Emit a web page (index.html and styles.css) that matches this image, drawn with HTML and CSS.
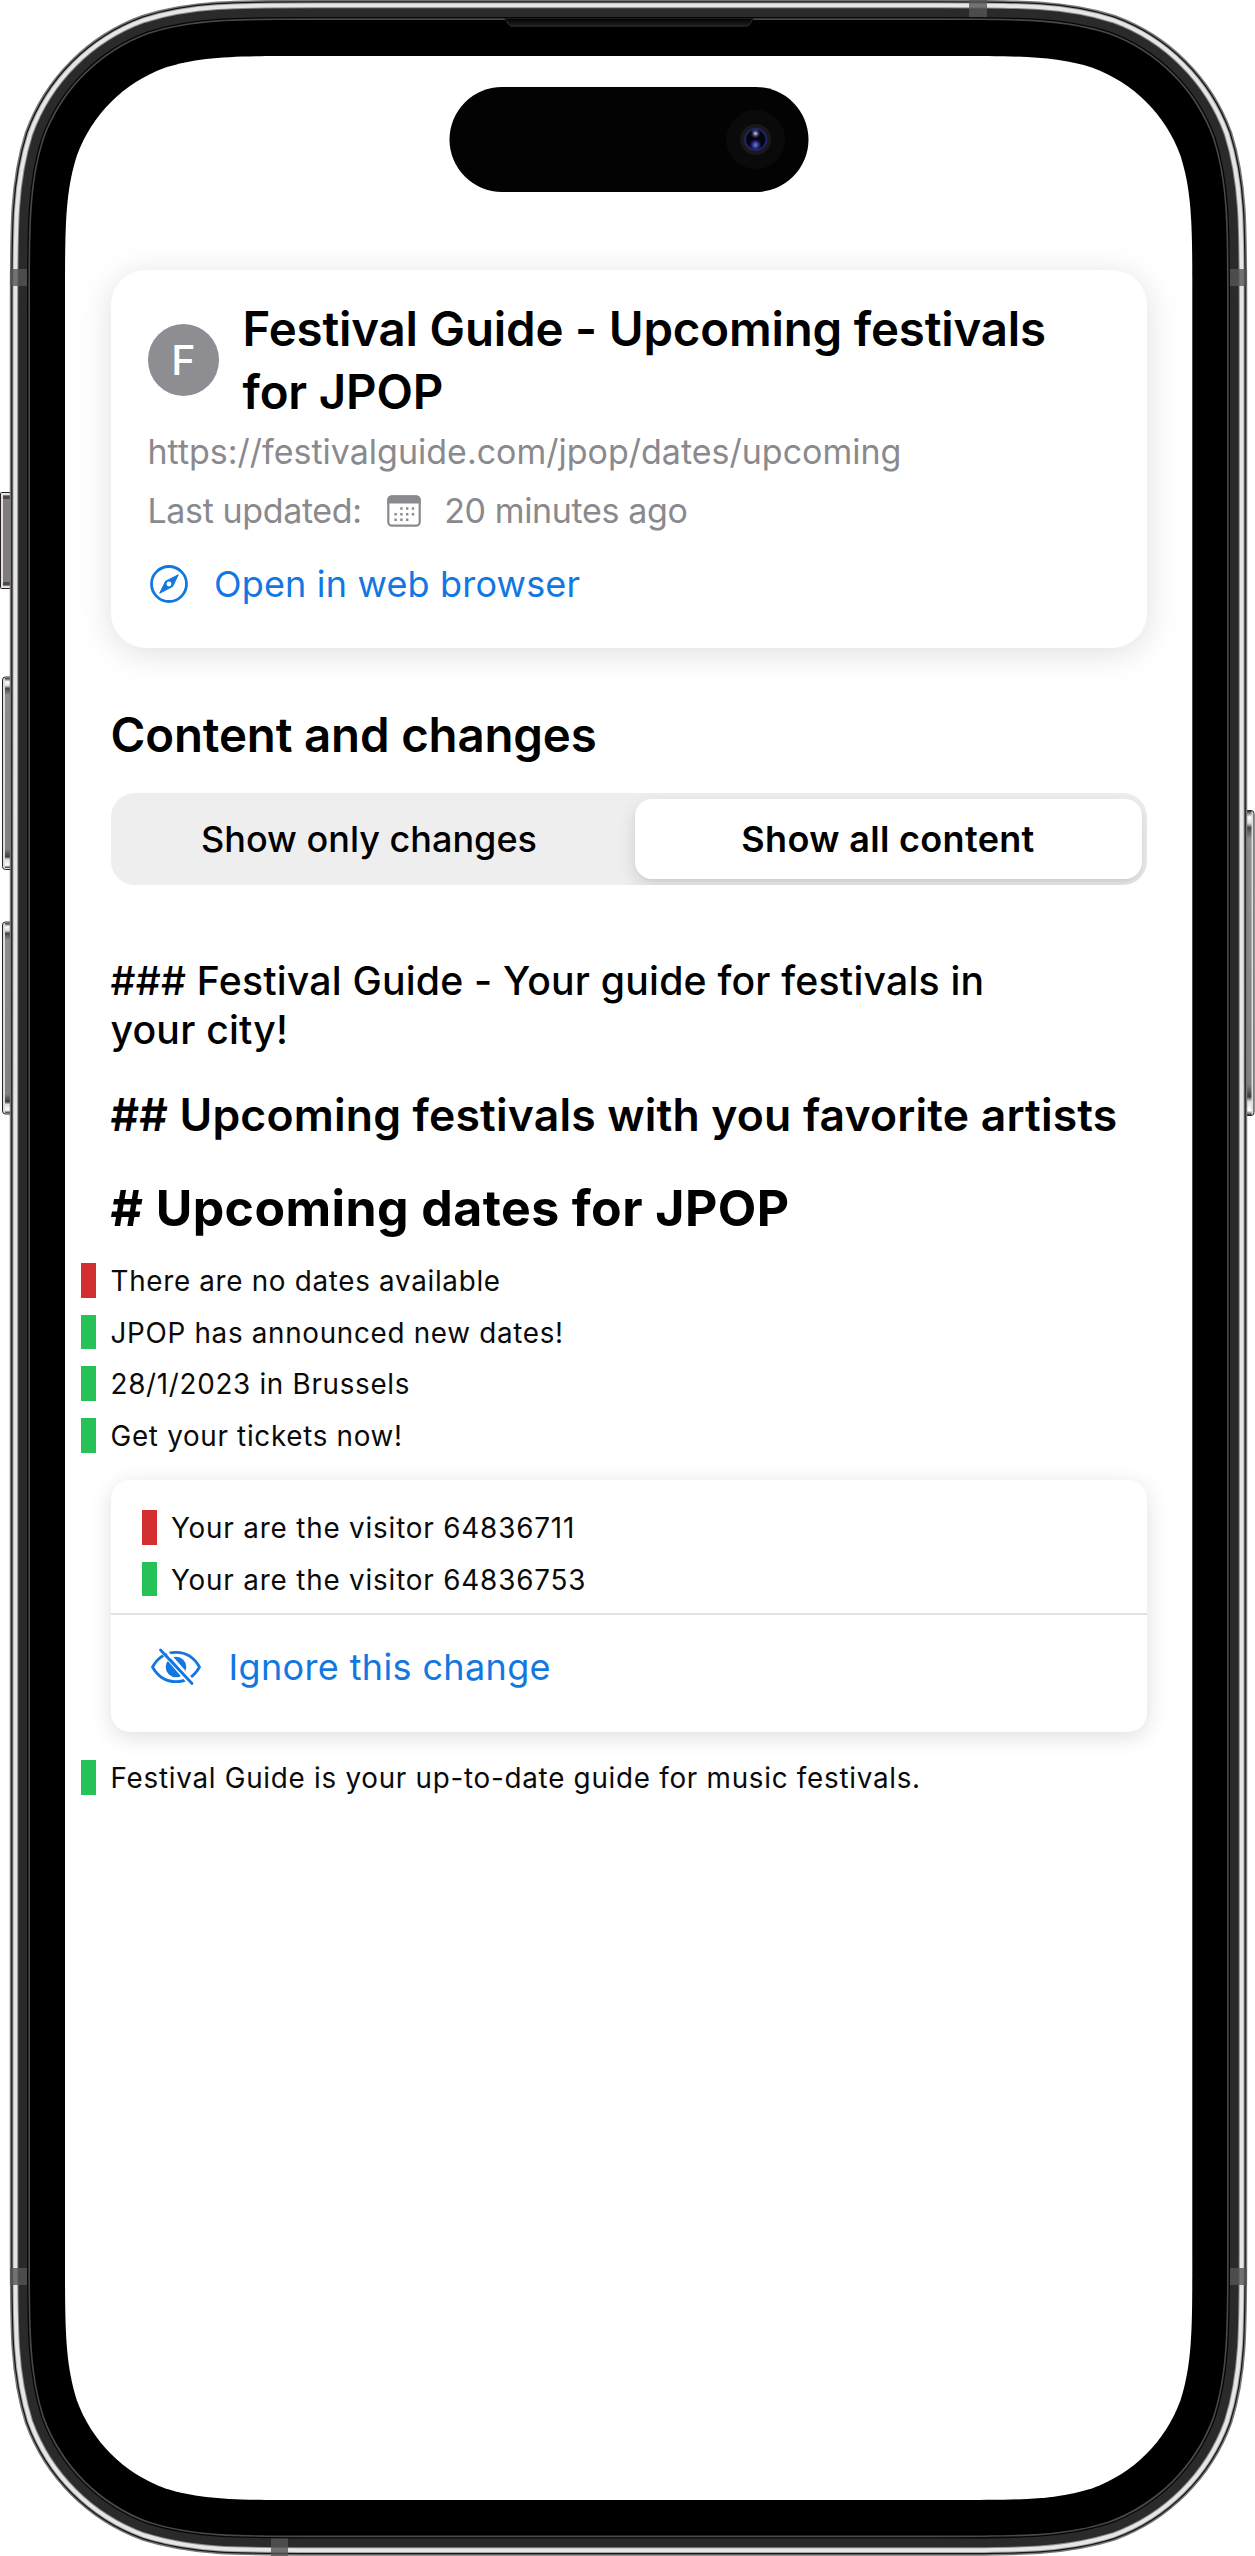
FILE: index.html
```html
<!DOCTYPE html>
<html lang="en">
<head>
<meta charset="utf-8">
<title>Festival Guide - Upcoming festivals for JPOP</title>
<link rel="stylesheet" href="styles.css">
</head>
<body>
<div class="phone">
  <svg class="frame" viewBox="0 0 1255 2556" aria-hidden="true">
    <defs>
      <path id="bezel" d="M30 307.4C30 224.6 30 183.3 44.1 138.7C61.8 90.1 100.1 51.8 148.7 34.1C193.3 20 234.6 20 317.4 20H939.6C1022.4 20 1063.7 20 1108.3 34.1C1156.9 51.8 1195.2 90.1 1212.9 138.7C1227 183.3 1227 224.6 1227 307.4V2248.1C1227 2330.9 1227 2372.2 1212.9 2416.8C1195.2 2465.4 1156.9 2503.7 1108.3 2521.4C1063.7 2535.5 1022.4 2535.5 939.6 2535.5H317.4C234.6 2535.5 193.3 2535.5 148.7 2521.4C100.1 2503.7 61.8 2465.4 44.1 2416.8C30 2372.2 30 2330.9 30 2248.1Z"/>
      <linearGradient id="cap" x1="0" y1="0" x2="0" y2="1">
        <stop offset="0" stop-color="#333"/><stop offset=".02" stop-color="#fff"/><stop offset=".04" stop-color="#ddd"/>
        <stop offset=".055" stop-color="#444"/><stop offset=".09" stop-color="#8f8c8b"/><stop offset=".9" stop-color="#827f7d"/>
        <stop offset=".94" stop-color="#3d3b3b"/><stop offset=".955" stop-color="#ddd"/><stop offset=".985" stop-color="#fff"/><stop offset="1" stop-color="#333"/>
      </linearGradient>
      <linearGradient id="earpiece" x1="0" y1="0" x2="0" y2="1">
        <stop offset="0" stop-color="#030303"/><stop offset="1" stop-color="#1e1e1e"/>
      </linearGradient>
      <radialGradient id="glint"><stop offset="0" stop-color="#d9d2f2"/><stop offset="1" stop-color="#4a3d9a" stop-opacity="0"/></radialGradient>
      <radialGradient id="glow"><stop offset="0" stop-color="#3f9db5"/><stop offset=".5" stop-color="#3a2d93"/><stop offset="1" stop-color="#2a1470" stop-opacity="0"/></radialGradient>
    </defs>

    <!-- side buttons -->
    <g stroke="#222" stroke-width="1">
      <rect x=".5" y="492.5" width="14" height="96" rx="1" fill="#e8e0e0"/>
      <rect x="2.5" y="677" width="14" height="192.5" rx="3" fill="#ddd"/>
      <rect x="2.5" y="922" width="14" height="192" rx="3" fill="#ddd"/>
      <rect x="1240" y="810.5" width="14" height="305" rx="3" fill="#ddd"/>
    </g>
    <rect x="3" y="495" width="8" height="91" fill="#827d7c"/>
    <path d="M3 497.500h8M3 583.500h8" stroke="#4c4948" stroke-width="3"/>
    <rect x="5" y="678" width="6" height="190" fill="url(#cap)"/>
    <rect x="5" y="923" width="6" height="190" fill="url(#cap)"/>
    <rect x="1246" y="811" width="5.500" height="304" fill="url(#cap)"/>

    <!-- metal rim, outermost layer first -->
    <g fill="none">
      <use href="#bezel" stroke="#777" stroke-width="40.500"/>
      <use href="#bezel" stroke="#161616" stroke-width="37.500"/>
      <use href="#bezel" stroke="#a5a5a5" stroke-width="35"/>
      <use href="#bezel" stroke="#e6e6e6" stroke-width="33"/>
      <use href="#bezel" stroke="#888" stroke-width="25.500"/>
      <use href="#bezel" stroke="#2b2a2a" stroke-width="23.500"/>
      <use href="#bezel" stroke="#060606" stroke-width="6"/>
      <use href="#bezel" stroke="#484848" stroke-width="3.400"/>
    </g>
    <use href="#bezel" fill="#000"/>

    <!-- antenna bands -->
    <g fill="#555" fill-opacity=".8">
      <path d="M10 269h17v17H10zM1230 269h17v17h-17zM10 2268h17v17H10zM1230 2268h17v17h-17zM969 0h18v17h-18zM271 2538.500h17V2556h-17z"/>
    </g>

    <path d="M504 18.500h250l-1.500 1.500c-3 2-2 6-7 6H513c-5 0-5-4-7.500-6z" fill="url(#earpiece)"/>
    <path d="M504.500 19c3 1 2.500 7.200 8.500 7.200h232.500c6 0 5-6.200 8-7.200" fill="none" stroke="#333"/>
    <path d="M65 297.500C65 228 65 193.200 76.800 155.800C91.700 114.900 123.900 82.700 164.800 67.800C202.200 56 237 56 306.500 56H950.800C1020.300 56 1055.100 56 1092.500 67.800C1133.400 82.700 1165.600 114.900 1180.500 155.800C1192.300 193.200 1192.300 228 1192.300 297.500V2258.500C1192.300 2328 1192.300 2362.800 1180.500 2400.200C1165.600 2441.100 1133.400 2473.300 1092.500 2488.200C1055.100 2500 1020.300 2500 950.800 2500H306.500C237 2500 202.200 2500 164.800 2488.200C123.900 2473.300 91.700 2441.100 76.800 2400.200C65 2362.800 65 2328 65 2258.500Z" fill="#fff"/>

    <!-- camera island -->
    <rect x="449.500" y="87" width="359" height="105" rx="52.500" fill="#030303"/>
    <circle cx="755.700" cy="139.500" r="29.500" fill="#0a0a0a"/>
    <circle cx="755.700" cy="139.500" r="15.500" fill="#191919"/>
    <circle cx="755.700" cy="139.500" r="10.700" fill="#05050f" stroke="#1d2465" stroke-width="2"/>
    <circle cx="755.500" cy="133.500" r="5" fill="url(#glint)"/>
    <circle cx="755.500" cy="145" r="6" fill="url(#glow)"/>
  </svg>

  <main class="content">
    <section class="site-card">
      <header class="site-head">
        <span class="avatar">F</span>
        <h1 class="site-title">Festival Guide - Upcoming festivals<br>for JPOP</h1>
      </header>
      <p class="meta">https://festivalguide.com/jpop/dates/upcoming</p>
      <p class="meta updated">
        <span class="tight">Last updated:</span>
        <svg class="calendar" viewBox="0 0 34 32" aria-hidden="true">
          <rect x="1.300" y="1.300" width="31.400" height="29.400" rx="3.700" fill="none" stroke="currentColor" stroke-width="2.200"/>
          <path d="M.5 8.500V5Q.5.500 5 .500h24q4.500 0 4.500 4.500v3.500z" fill="currentColor"/>
          <path d="M13.200 13.600h2.400M19 13.600h2.400M24.800 13.600h2.400M7.400 19.200h2.400M13.200 19.200h2.400M19 19.200h2.400M24.800 19.200h2.400M7.400 24.800h2.400M13.200 24.800h2.400M19 24.800h2.400" stroke="currentColor" stroke-width="2.500"/>
        </svg>
        <span class="tight">20 minutes ago</span>
      </p>
      <a class="action open">
        <svg class="compass" viewBox="0 0 38 38" aria-hidden="true">
          <circle cx="19" cy="19" r="17.500" fill="none" stroke="currentColor" stroke-width="2.800"/>
          <path d="M28.300 9.800L22.600 21.500 9.700 28.200 15.600 16.200Z" fill="currentColor" stroke="currentColor" stroke-width="1" stroke-linejoin="round"/>
          <circle cx="19" cy="19" r="2.400" fill="#fff"/>
        </svg>
        <span>Open in web browser</span>
      </a>
    </section>

    <h2 class="section-title">Content and changes</h2>
    <div class="segmented">
      <button class="segment">Show only changes</button>
      <button class="segment selected">Show all content</button>
    </div>

    <h5 class="level-3">### Festival Guide - Your guide for festivals in<br>your city!</h5>
    <h4 class="level-2">## Upcoming festivals with you favorite artists</h4>
    <h3 class="level-1"># Upcoming dates for JPOP</h3>

    <ul class="changes">
      <li class="change removed">There are no dates available</li>
      <li class="change added">JPOP has announced new dates!</li>
      <li class="change added">28/1/2023 in Brussels</li>
      <li class="change added">Get your tickets now!</li>
    </ul>

    <section class="change-card">
      <ul class="changes inset">
        <li class="change removed">Your are the visitor 64836711</li>
        <li class="change added">Your are the visitor 64836753</li>
      </ul>
      <a class="action ignore">
        <svg class="eye" viewBox="0 0 50 38" aria-hidden="true">
          <path d="M1.500 19C6.500 10 15 4.300 25 4.300S43.500 10 48.500 19C43.500 28 35 33.700 25 33.700S6.500 28 1.500 19Z" fill="none" stroke="currentColor" stroke-width="2.800" stroke-linejoin="round"/>
          <circle cx="25" cy="19" r="10.300" fill="currentColor"/>
          <path d="M7.500 0L39.500 37M11.500-1L43.500 35" stroke="#fff" stroke-width="2.800"/>
          <path d="M9.500 2L41 35.500" stroke="currentColor" stroke-width="2.800" stroke-linecap="round"/>
        </svg>
        <span>Ignore this change</span>
      </a>
    </section>

    <ul class="changes last">
      <li class="change added">Festival Guide is your up-to-date guide for music festivals.</li>
    </ul>
  </main>
</div>
</body>
</html>
```

FILE: styles.css
```css
* { box-sizing: border-box; }

body {
  margin: 0;
  background: #fff;
  color: #000;
  font-family: Inter, "Liberation Sans", sans-serif;
}

h1, h2, h3, h4, h5, p, ul { margin: 0; padding: 0; }
ul { list-style: none; }

.phone {
  position: relative;
  width: 1255px;
  height: 2556px;
  overflow: hidden;
}

.frame {
  position: absolute;
  inset: 0;
  width: 1255px;
  height: 2556px;
}

.content {
  position: relative;
  padding: 270px 108.5px 0 110.5px;
}

.site-card {
  height: 378px;
  padding: 27px 37px 0;
  border-radius: 35px;
  background: #fff;
  box-shadow: 0 5px 34px rgba(0, 0, 0, .13);
}

.site-head {
  display: flex;
  align-items: center;
  gap: 23.5px;
}

.avatar {
  flex: none;
  width: 71.5px;
  height: 72px;
  border-radius: 50%;
  background: #8e8d92;
  color: #fff;
  font-size: 41px;
  font-weight: 500;
  line-height: 72px;
  text-align: center;
}

.site-title {
  font-size: 47.4px;
  font-weight: 600;
  line-height: 63px;
  letter-spacing: -.16px;
  white-space: nowrap;
}

.meta {
  height: 58.5px;
  color: #8a8a8e;
  font-size: 34px;
  line-height: 58.5px;
}

.updated {
  display: flex;
  align-items: center;
}

.tight { letter-spacing: -.37px; }

.calendar {
  width: 34px;
  height: 32px;
  margin: 0 23px 0 25.5px;
}

.action {
  display: flex;
  align-items: center;
  height: 50px;
  color: #1277e1;
  font-size: 36px;
  line-height: 50px;
}

.open {
  margin-top: 18.5px;
  padding-left: 2px;
  gap: 26.5px;
  letter-spacing: .17px;
}

.compass { width: 38px; height: 38px; }

.section-title {
  margin-top: 57px;
  font-size: 47.4px;
  font-weight: 600;
  line-height: 60px;
  letter-spacing: -.15px;
}

.segmented {
  display: grid;
  grid-template-columns: 1fr 507px;
  height: 92px;
  margin-top: 27.5px;
  margin-bottom: .5px;
  padding: 6px 5px 6px 0;
  border-radius: 24px;
  background: #eee;
  overflow: hidden;
}

.segment {
  padding: 0 7px 0 0;
  border: 0;
  border-radius: 17px;
  background: none;
  color: #000;
  font: 500 36px/80px Inter, "Liberation Sans", sans-serif;
}

.segment.selected {
  padding: 0;
  background: #fff;
  box-shadow: 0 7px 18px rgba(0, 0, 0, .12), 0 2px 3px rgba(0, 0, 0, .04);
  font-weight: 600;
  letter-spacing: .33px;
}

.level-3 {
  margin-top: 71.5px;
  font-size: 39.2px;
  font-weight: 500;
  line-height: 49px;
  letter-spacing: .2px;
}

.level-2 {
  margin-top: 33.5px;
  font-size: 44.5px;
  font-weight: 600;
  line-height: 54px;
  letter-spacing: .17px;
  white-space: nowrap;
}

.level-1 {
  margin-top: 36.5px;
  font-size: 50px;
  font-weight: 700;
  line-height: 60px;
  letter-spacing: .42px;
}

.changes {
  display: flex;
  flex-direction: column;
  gap: 17px;
  margin: 25px 0 0 -29.5px;
}

.change {
  height: 34.700px;
  padding-left: 14.5px;
  border-left: 15px solid;
  font-size: 27.8px;
  line-height: 36.700px;
  letter-spacing: .7px;
  white-space: nowrap;
  -webkit-text-fill-color: #0a0a0a;
}

.removed { border-color: #d32f30; }
.added { border-color: #26c157; }

.change-card {
  height: 251.5px;
  margin-top: 27.7px;
  border-radius: 19px;
  background: #fff;
  box-shadow: 0 5px 22px rgba(0, 0, 0, .13);
}

.inset {
  margin: 0;
  padding: 29.5px 0 16.5px 31px;
  border-bottom: 2px solid #e2e2e3;
}

.inset .change { letter-spacing: .83px; }

.ignore {
  margin-top: 27.5px;
  padding-left: 40.5px;
  gap: 27.5px;
  letter-spacing: .36px;
}

.eye { width: 50px; height: 38px; }

.last { margin-top: 28.5px; }
.last .change { letter-spacing: .73px; }
```
